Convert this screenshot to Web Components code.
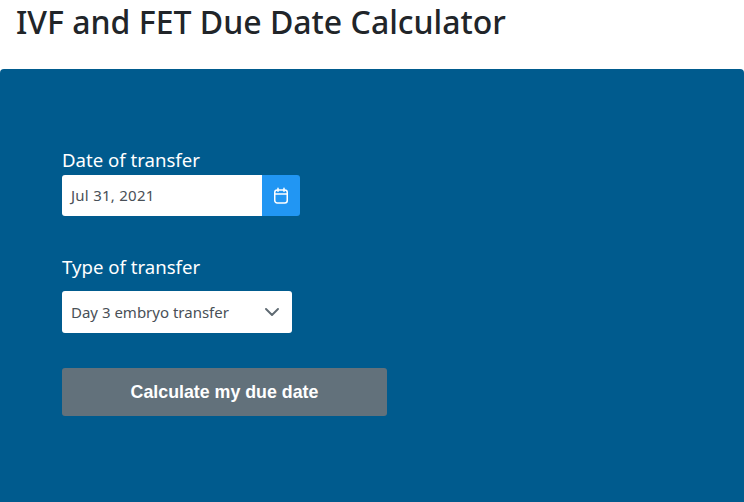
<!DOCTYPE html>
<html>
<head>
<meta charset="utf-8">
<title>IVF and FET Due Date Calculator</title>
<style>
html, body { margin: 0; height: 100%; overflow: hidden; background: #fff; }
body { font-family: "Noto Sans", "Open Sans", sans-serif; }
</style>
</head>
<body>
<calc-page>
  <span slot="title">IVF and FET Due Date Calculator</span>
  <date-field label="Date of transfer" value="Jul 31, 2021"></date-field>
  <select-field label="Type of transfer" value="Day 3 embryo transfer"></select-field>
  <submit-button>Calculate my due date</submit-button>
</calc-page>
<script>
class CalcPage extends HTMLElement {
  connectedCallback() {
    this.attachShadow({ mode: 'open' });
    this.shadowRoot.innerHTML = `
      <style>
        :host { display: flex; flex-direction: column; height: 502px; }
        h1 {
          margin: 0;
          height: 69px;
          padding: 0 0 0 16px;
          box-sizing: border-box;
          font-size: 32px;
          line-height: 44px;
          font-weight: 500;
          color: #212529;
          white-space: nowrap;
        }
        .panel {
          flex: 1;
          background: #005b8e;
          border-radius: 4px 4px 0 0;
          padding: 79px 62px 0;
          display: flex;
          flex-direction: column;
          align-items: flex-start;
        }
      </style>
      <h1><slot name="title"></slot></h1>
      <div class="panel"><slot></slot></div>
    `;
  }
}

class DateField extends HTMLElement {
  connectedCallback() {
    this.attachShadow({ mode: 'open' });
    this.shadowRoot.innerHTML = `
      <style>
        :host { display: block; margin-bottom: 39px; }
        label { display: block; color: #fff; font-size: 18.6px; line-height: 24px; height: 27px; }
        .group { display: flex; height: 41px; width: 238px; }
        .value {
          flex: 0 0 200px; box-sizing: border-box; background: #fff;
          border-radius: 3px 0 0 3px; padding: 0 0 2px 9px;
          display: flex; align-items: center;
          color: #495057; font-size: 15px; letter-spacing: .25px;
        }
        .btn {
          flex: 1; background: #2196f3; border-radius: 0 3px 3px 0;
          display: flex; align-items: center; justify-content: center;
        }
      </style>
      <label>${this.getAttribute('label')}</label>
      <div class="group">
        <div class="value">${this.getAttribute('value')}</div>
        <div class="btn">
          <svg width="16" height="18" viewBox="0 0 16 18" fill="none" stroke="#fff" stroke-width="1.5" stroke-linecap="round">
            <rect x="1.75" y="3" width="12.5" height="13" rx="2.5"/>
            <path d="M2 7h12M5 1.2v3M11 1.2v3"/>
          </svg>
        </div>
      </div>
    `;
  }
}

class SelectField extends HTMLElement {
  connectedCallback() {
    this.attachShadow({ mode: 'open' });
    this.shadowRoot.innerHTML = `
      <style>
        :host { display: block; margin-bottom: 35px; }
        label { display: block; color: #fff; font-size: 18.6px; line-height: 24px; height: 36px; }
        .box {
          width: 230px; height: 42px; box-sizing: border-box; background: #fff;
          border-radius: 3px; padding: 0 13px 0 9px;
          display: flex; align-items: center; justify-content: space-between;
          color: #495057; font-size: 15px;
        }
      </style>
      <label>${this.getAttribute('label')}</label>
      <div class="box">
        <span>${this.getAttribute('value')}</span>
        <svg width="14" height="8" viewBox="0 0 14 8" fill="none" stroke="#5f6a72" stroke-width="1.9" stroke-linecap="round" stroke-linejoin="round">
          <path d="M1 1l6 6 6-6"/>
        </svg>
      </div>
    `;
  }
}

class SubmitButton extends HTMLElement {
  connectedCallback() {
    this.attachShadow({ mode: 'open' });
    this.shadowRoot.innerHTML = `
      <style>
        :host {
          display: flex; align-items: center; justify-content: center;
          width: 325px; height: 48px; background: #62717b; border-radius: 3px;
          color: #fff; font-family: "Liberation Sans", Arial, sans-serif;
          font-size: 17.8px; font-weight: 700;
        }
      </style>
      <slot></slot>
    `;
  }
}

customElements.define('calc-page', CalcPage);
customElements.define('date-field', DateField);
customElements.define('select-field', SelectField);
customElements.define('submit-button', SubmitButton);
</script>
</body>
</html>
